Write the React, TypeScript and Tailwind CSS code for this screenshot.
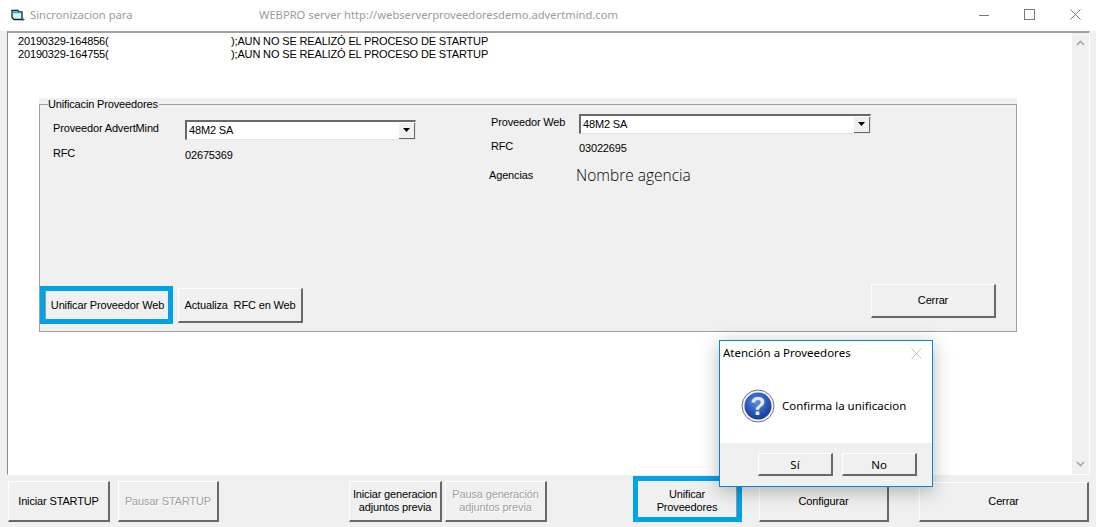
const raised =
  "border-t border-l border-t-white border-l-white border-r-2 border-b-2 border-r-[#696969] border-b-[#696969] bg-[#f0f0f0] flex items-center justify-center text-center leading-[13px]";

const disabledText = "text-[#a0a0a0] [text-shadow:1px_1px_0_#fff]";

const Combo = ({ value, width }: { value: string; width: string }) => (
  <div className={`${width} h-[20px] flex items-center bg-white border-t-2 border-l-2 border-t-[#696969] border-l-[#696969] border-b border-r border-b-[#e3e3e3] border-r-[#e3e3e3]`}>
    <span className="flex-1 pl-[2px]">{value}</span>
    <div className="w-[16px] h-[16px] bg-[#f0f0f0] border-r border-b border-r-[#696969] border-b-[#696969] flex items-center justify-center">
      <svg width="7" height="4" viewBox="0 0 7 4">
        <path d="M0 0h7L3.5 4z" fill="#000" />
      </svg>
    </div>
  </div>
);

const AppIcon = () => (
  <svg width="14" height="13" viewBox="0 0 14 13" fill="none" className="shrink-0">
    <path d="M1 1.5h6l1 1.5h3v7.5H3L1 8.5z" fill="#d8f4fb" stroke="#12222e" strokeWidth="1.3" />
    <path d="M1.5 3.5h9" stroke="#19a6d4" strokeWidth="1.4" />
    <path d="M11 10.5h2.5M12 9v3" stroke="#4a5a66" strokeWidth="1" />
  </svg>
);

const WindowControls = () => (
  <div className="ml-auto mr-[15px] -mt-[2px] flex items-center gap-[35px]">
    <svg width="10" height="10" viewBox="0 0 10 10" stroke="#7a7a7a" fill="none">
      <path d="M0 5.5h10" />
    </svg>
    <svg width="11" height="11" viewBox="0 0 11 11" stroke="#7a7a7a" fill="none">
      <rect x="0.5" y="0.5" width="10" height="10" />
    </svg>
    <svg width="11" height="11" viewBox="0 0 11 11" stroke="#7a7a7a" fill="none">
      <path d="M0.5 0.5l10 10M10.5 0.5l-10 10" />
    </svg>
  </div>
);

const QuestionIcon = () => (
  <svg width="34" height="34" viewBox="0 0 34 34" className="shrink-0">
    <defs>
      <radialGradient id="ball" cx="45%" cy="35%" r="75%">
        <stop offset="0%" stopColor="#5f8fe6" />
        <stop offset="55%" stopColor="#2a55b5" />
        <stop offset="100%" stopColor="#12317f" />
      </radialGradient>
    </defs>
    <circle cx="17" cy="17" r="16" fill="#f2f4f8" stroke="#6d7480" />
    <circle cx="17" cy="17" r="13.5" fill="url(#ball)" />
    <text x="17" y="26" textAnchor="middle" fontSize="25" fontWeight="700" fontFamily="Liberation Sans, sans-serif" fill="#e6e8ee">
      ?
    </text>
  </svg>
);

const ConfirmDialog = () => (
  <div className="absolute left-[719px] top-[340px] w-[214px] h-[147px] bg-white border border-[#0a84d6] shadow-[0_4px_18px_rgba(0,0,0,0.28)] flex flex-col font-['Noto_Sans',sans-serif] text-[11.5px] tracking-normal">
    <div className="h-[24px] flex items-center justify-between pl-[3px] pr-[10px]">
      <span>Atención a Proveedores</span>
      <svg width="11" height="11" viewBox="0 0 11 11" stroke="#c4c4c4" fill="none">
        <path d="M0.5 0.5l10 10M10.5 0.5l-10 10" />
      </svg>
    </div>
    <div className="flex-1 flex items-center gap-[7px] pl-[21px] pt-[3px]">
      <QuestionIcon />
      <span>Confirma la unificacion</span>
    </div>
    <div className="h-[43px] bg-[#f0f0f0] flex items-start justify-end gap-[9px] pt-[10px] pr-[15px]">
      <div className={`${raised} w-[75px] h-[23px]`}>Sí</div>
      <div className={`${raised} w-[75px] h-[23px]`}>No</div>
    </div>
  </div>
);

const GroupPanel = () => (
  <div className="ml-[31px] w-[978px] h-[234px] bg-[#f0f0f0]">
    <fieldset className="h-full border border-[#a0a0a0] pl-[8px] pr-[20px] pb-[7px] flex flex-col">
      <legend className="h-[13px] leading-[13px] pr-[1px]">Unificacin Proveedores</legend>
      <div className="flex flex-1">
        <div className="w-[443px] pl-[5px] pt-[9px]">
          <div className="flex">
            <span className="w-[132px]">Proveedor AdvertMind</span>
            <Combo value="48M2 SA" width="w-[231px]" />
          </div>
          <div className="flex mt-[5px]">
            <span className="w-[132px]">RFC</span>
            <span className="mt-[2px]">02675369</span>
          </div>
        </div>
        <div className="pt-[3px]">
          <div className="flex">
            <span className="w-[88px]">Proveedor Web</span>
            <Combo value="48M2 SA" width="w-[292px]" />
          </div>
          <div className="flex mt-[4px]">
            <span className="w-[88px]">RFC</span>
            <span className="mt-[2px]">03022695</span>
          </div>
          <div className="flex items-center mt-[7px] -ml-[2px]">
            <span className="w-[87px]">Agencias</span>
            <span className="font-['Open_Sans',sans-serif] font-light text-[15.5px] tracking-normal">Nombre agencia</span>
          </div>
        </div>
      </div>
      <div className="flex items-end -ml-[8px]">
        <div className="w-[133px] h-[38px] border-[5px] border-[#00a2e8]">
          <div className="h-full pl-[1px] border-l border-l-[#9a9a9a] bg-[#f0f0f0] flex items-center justify-center">Unificar Proveedor Web</div>
        </div>
        <div className={`${raised} ml-[5px] mb-[1px] w-[125px] h-[35px]`}>Actualiza&nbsp; RFC en Web</div>
        <div className={`${raised} ml-auto mb-[6px] w-[125px] h-[34px]`}>Cerrar</div>
      </div>
    </fieldset>
  </div>
);

const Scrollbar = () => (
  <div className="w-[17px] bg-[#f0f0f0] flex flex-col items-center justify-between py-[7px]">
    <svg width="9" height="6" viewBox="0 0 9 6" fill="none" stroke="#a6a6a6" strokeWidth="1.6">
      <path d="M1 5l3.5-3.5L8 5" />
    </svg>
    <svg width="9" height="6" viewBox="0 0 9 6" fill="none" stroke="#a6a6a6" strokeWidth="1.6">
      <path d="M1 1l3.5 3.5L8 1" />
    </svg>
  </div>
);

const BottomBar = () => (
  <div className="h-[52px] bg-[#f0f0f0] flex items-end pb-[5px] pl-[8px]">
    <div className={`${raised} w-[102px] h-[41px]`}>Iniciar STARTUP</div>
    <div className={`${raised} ${disabledText} ml-[8px] w-[101px] h-[41px]`}>Pausar STARTUP</div>
    <div className={`${raised} ml-[130px] w-[93px] h-[41px]`}>
      Iniciar generacion
      <br />
      adjuntos previa
    </div>
    <div className={`${raised} ${disabledText} ml-[3px] w-[102px] h-[41px]`}>
      Pausa generación
      <br />
      adjuntos previa
    </div>
    <div className="ml-[86px] w-[109px] h-[46px] border-[5px] border-[#00a2e8]">
      <div className="h-full pt-[4px] border-r border-r-[#9a9a9a] bg-[#f0f0f0] flex items-center justify-center text-center leading-[13px]">
        <div>
          Unificar
          <br />
          Proveedores
        </div>
      </div>
    </div>
    <div className={`${raised} ml-[17px] w-[130px] h-[40px]`}>Configurar</div>
    <div className={`${raised} ml-[30px] w-[170px] h-[40px]`}>Cerrar</div>
  </div>
);

export default function App() {
  return (
    <div className="relative w-[1096px] h-[527px] overflow-hidden flex flex-col bg-white font-['Liberation_Sans',sans-serif] text-[11px] tracking-[-0.15px] text-black">
      <div className="h-[31px] flex items-center bg-white pl-[11px] font-['Noto_Sans',sans-serif] text-[11.2px] tracking-normal text-[#9b9b9b]">
        <AppIcon />
        <span className="ml-[5px] w-[229px]">Sincronizacion para</span>
        <span>WEBPRO server http://webserverproveedoresdemo.advertmind.com</span>
        <WindowControls />
      </div>
      <div className="flex-1 min-h-0 flex bg-[#f0f0f0] pl-[7px] pr-[6px]">
        <div className="flex-1 flex border-t-2 border-l border-r border-b border-t-[#a0a0a0] border-l-[#8a8a8a] border-r-white border-b-white bg-white">
          <div className="flex-1 pt-[2px]">
            <div className="pl-[10px] leading-[13px]">
              <div className="grid grid-cols-[213px_1fr]">
                <span>20190329-164856(</span>
                <span>);AUN NO SE REALIZÓ EL PROCESO DE STARTUP</span>
                <span>20190329-164755(</span>
                <span>);AUN NO SE REALIZÓ EL PROCESO DE STARTUP</span>
              </div>
            </div>
            <div className="mt-[37px]">
              <GroupPanel />
            </div>
          </div>
          <Scrollbar />
        </div>
      </div>
      <BottomBar />
      <ConfirmDialog />
    </div>
  );
}
